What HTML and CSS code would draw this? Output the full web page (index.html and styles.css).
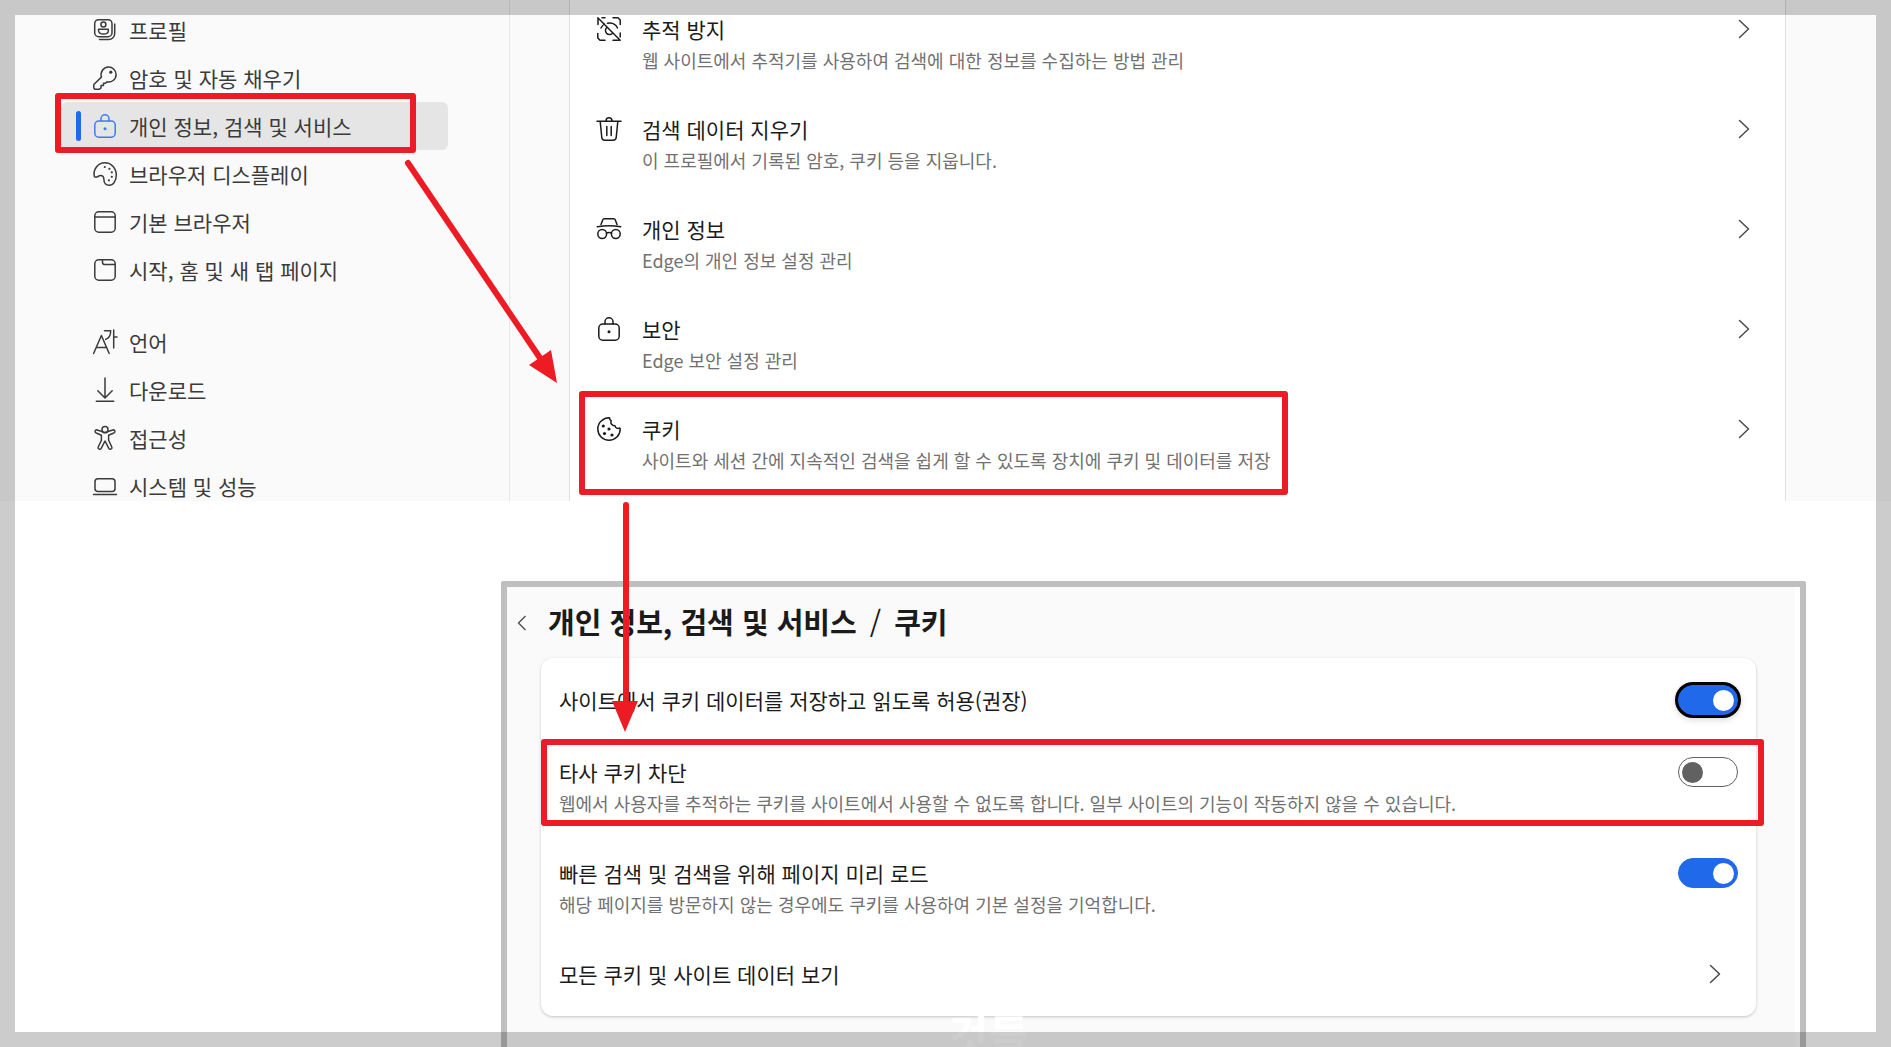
FILE: index.html
```
<!doctype html>
<html lang="ko">
  <head>
    <meta charset="UTF-8" />
    <meta name="viewport" content="width=device-width, initial-scale=1.0" />
    <title>Edge 쿠키 설정</title>
    <link rel="stylesheet" href="styles.css">
  </head>
  <body>
    <svg class="sprite" aria-hidden="true">
      <symbol id="chevron" viewBox="0 0 24 24"><path d="M7.500 3.500 16.500 12 7.500 20.500" /></symbol>
      <symbol id="lock" viewBox="0 0 24 24">
        <path d="M8 7V4.800a4 4 0 0 1 8 0V7" />
        <rect x="1.800" y="7" width="20.400" height="16.200" rx="4" />
        <circle cx="12" cy="14.800" r="1.500" class="dot" />
      </symbol>
    </svg>

    <section class="settings">
      <nav class="sidebar">
        <a class="nav-item" href="#">
          <svg class="icon" viewBox="0 0 24 24">
            <rect x="1.700" y="1.700" width="17.300" height="17" rx="4" />
            <circle cx="10.400" cy="6.500" r="2.500" />
            <path d="M5.500 11.200h9.800v1.200c0 2.200-2 3.600-4.900 3.600s-4.900-1.400-4.900-3.600zM21.700 6v9.500a6 6 0 0 1-6 6H6.500" />
          </svg>
          <span>프로필</span>
        </a>
        <a class="nav-item" href="#">
          <svg class="icon" viewBox="0 0 24 24">
            <path d="M15.500 1a7.500 7.500 0 0 1 7.600 7.500c0 5.200-4.700 8.400-9.100 7.300l-1.500 1.500h-2v2.200H8V22l-1.600 1.200H1.900L.8 22v-3.500l7.600-7.400C6.900 6.200 10.500 1 15.500 1z" />
            <circle cx="17.800" cy="6.200" r="1.600" class="dot" />
          </svg>
          <span>암호 및 자동 채우기</span>
        </a>
        <a class="nav-item active marked" href="#">
          <svg class="icon"><use href="#lock" /></svg>
          <span>개인 정보, 검색 및 서비스</span>
        </a>
        <a class="nav-item" href="#">
          <svg class="icon" viewBox="0 0 24 24">
            <path d="M1.400 14.700C-.3 8 4.500.8 12 .8c6.500 0 11.300 5.500 11.300 12.200 0 6-3 10.200-7.200 10.200-3.300 0-5.200-2-5.200-5.600 0-2.400-1.200-4-3.400-4-2.500 0-3.500 2.800-6.100 1.100z" />
            <g class="dot"><circle cx="11.800" cy="5" r="1.100" /><circle cx="16.400" cy="6.800" r="1.100" /><circle cx="18.800" cy="10.300" r="1.100" /><circle cx="18.800" cy="14.800" r="1.100" /><circle cx="15.900" cy="18.300" r="1.100" /></g>
          </svg>
          <span>브라우저 디스플레이</span>
        </a>
        <a class="nav-item" href="#">
          <svg class="icon" viewBox="0 0 24 24">
            <rect x="1.800" y="1.800" width="20.400" height="20.400" rx="4" />
            <path d="M2 7h20" />
          </svg>
          <span>기본 브라우저</span>
        </a>
        <a class="nav-item" href="#">
          <svg class="icon" viewBox="0 0 24 24">
            <rect x="1.800" y="1.800" width="20.400" height="20.400" rx="4" />
            <path d="M9.500 2v2.200c0 1.600 1 2.400 2.400 2.400H22" />
          </svg>
          <span>시작, 홈 및 새 탭 페이지</span>
        </a>
        <a class="nav-item group-start" href="#">
          <svg class="icon" viewBox="0 0 24 24">
            <path d="m.600 23.500 7.800-18 7.800 18M3.400 17.500h10M11.500.800h6.200c0 5.200-1.500 7.400-5 8.600M20.700 0v18M20.700 7h3.300" />
          </svg>
          <span>언어</span>
        </a>
        <a class="nav-item" href="#">
          <svg class="icon" viewBox="0 0 24 24">
            <path d="M12 0v20M4.800 12.800 12 20l7.200-7.200M3.300 23.200h17.400" />
          </svg>
          <span>다운로드</span>
        </a>
        <a class="nav-item" href="#">
          <svg class="icon" viewBox="0 0 24 24">
            <circle cx="12" cy="3.600" r="3" />
            <path d="M9 5.500 4.200 4C2.300 3.400 1 6 3.200 7l5.200 2.200v5L5.200 21c-.8 2 2 3.200 3 1.300L12 15l3.800 7.300c1 1.900 3.800.7 3-1.300l-3.200-6.800v-5L20.800 7c2.200-1 .9-3.600-1-3L15 5.500C13.500 7.200 10.500 7.200 9 5.500z" />
          </svg>
          <span>접근성</span>
        </a>
        <a class="nav-item" href="#">
          <svg class="icon" viewBox="0 0 24 24">
            <rect x="2" y="4.800" width="20" height="12.700" rx="3" />
            <path d="M.500 20.500h23" />
          </svg>
          <span>시스템 및 성능</span>
        </a>
      </nav>

      <main class="content">
        <div class="list">
          <a class="row" href="#">
            <svg class="icon" viewBox="0 0 24 24">
              <path d="M1 7.500V1M5 .800h3M16 .800h5l2.200 2.200v4.500M.800 16.500v4.500L3 23.200h5M16 23.200h6M23.200 16v4M.800.800l22.400 22.400M4 11c.8-1.600 2-3 3.500-4M10.500 6.200C15 5.400 19 7.600 20.500 11M9.800 10.500a3.800 3.800 0 1 0 5.400 6" />
            </svg>
            <span class="text"><span class="title">추적 방지</span><span class="desc">웹 사이트에서 추적기를 사용하여 검색에 대한 정보를 수집하는 방법 관리</span></span>
            <svg class="icon chevron"><use href="#chevron" /></svg>
          </a>
          <a class="row" href="#">
            <svg class="icon" viewBox="0 0 24 24">
              <path d="M0 4.200h24M9 4c0-4.300 6-4.300 6 0M3.200 4.500l1.600 16a3 3 0 0 0 3 2.700h8.400a3 3 0 0 0 3-2.700l1.600-16M9.800 9.500v9M14.200 9.500v9" />
            </svg>
            <span class="text"><span class="title">검색 데이터 지우기</span><span class="desc">이 프로필에서 기록된 암호, 쿠키 등을 지웁니다.</span></span>
            <svg class="icon chevron"><use href="#chevron" /></svg>
          </a>
          <a class="row" href="#">
            <svg class="icon" viewBox="0 0 24 24">
              <path d="m4 7.500 1.800-4.700c.3-.7.800-1.100 1.500-1.100h9.400c.7 0 1.200.4 1.500 1.100L20 7.500M.300 9.700c7.500-1.300 15.900-1.300 23.400 0M9.500 16.200c1.500-.8 3.500-.8 5 0" />
              <circle cx="5.200" cy="17" r="4.400" />
              <circle cx="18.800" cy="17" r="4.400" />
            </svg>
            <span class="text"><span class="title">개인 정보</span><span class="desc">Edge의 개인 정보 설정 관리</span></span>
            <svg class="icon chevron"><use href="#chevron" /></svg>
          </a>
          <a class="row" href="#">
            <svg class="icon"><use href="#lock" /></svg>
            <span class="text"><span class="title">보안</span><span class="desc">Edge 보안 설정 관리</span></span>
            <svg class="icon chevron"><use href="#chevron" /></svg>
          </a>
          <a class="row marked" href="#">
            <svg class="icon" viewBox="0 0 24 24">
              <path d="M12.500.800C6 .700.800 5.800.800 12S5.800 23.200 12 23.200 23.200 18.200 23.200 12l-.4-1c-2.200.9-4.300.3-4.800-2.200-3 0-4.900-2.200-3.800-5.200C13 3.200 12.400 2.300 12.500.800z" />
              <g class="dot"><circle cx="6.300" cy="9" r="1.600" /><circle cx="12" cy="12" r="1.600" /><circle cx="7.500" cy="16.500" r="1.600" /><circle cx="15" cy="18" r="1.600" /></g>
            </svg>
            <span class="text"><span class="title">쿠키</span><span class="desc">사이트와 세션 간에 지속적인 검색을 쉽게 할 수 있도록 장치에 쿠키 및 데이터를 저장</span></span>
            <svg class="icon chevron"><use href="#chevron" /></svg>
          </a>
        </div>
      </main>
    </section>

    <section class="panel">
      <header class="panel-header">
        <button class="back" type="button" aria-label="뒤로">
          <svg viewBox="0 0 10 16"><path d="M8.500 1 1.500 8l7 7" /></svg>
        </button>
        <h1>
          <span>개인 정보, 검색 및 서비스</span>
          <span class="slash">/</span>
          <span>쿠키</span>
        </h1>
      </header>
      <div class="card">
        <div class="option single">
          <label class="title" for="allow-cookies">사이트에서 쿠키 데이터를 저장하고 읽도록 허용(권장)</label>
          <input class="toggle ring" type="checkbox" id="allow-cookies" checked />
        </div>
        <div class="option marked">
          <label class="text" for="block-third">
            <span class="title">타사 쿠키 차단</span>
            <span class="desc">웹에서 사용자를 추적하는 쿠키를 사이트에서 사용할 수 없도록 합니다. 일부 사이트의 기능이 작동하지 않을 수 있습니다.</span>
          </label>
          <input class="toggle" type="checkbox" id="block-third" />
        </div>
        <div class="option">
          <label class="text" for="preload">
            <span class="title">빠른 검색 및 검색을 위해 페이지 미리 로드</span>
            <span class="desc">해당 페이지를 방문하지 않는 경우에도 쿠키를 사용하여 기본 설정을 기억합니다.</span>
          </label>
          <input class="toggle" type="checkbox" id="preload" checked />
        </div>
        <a class="option single" href="#">
          <span class="title">모든 쿠키 및 사이트 데이터 보기</span>
          <svg class="icon chevron"><use href="#chevron" /></svg>
        </a>
      </div>
    </section>

    <!-- arrows between the highlighted steps -->
    <svg class="arrows" aria-hidden="true">
      <path class="shaft" d="M408 163 540 358M626 505V704" />
      <path class="head" d="M557 383 529 365 551 350ZM625 732 612 701H638Z" />
    </svg>
    <div class="watermark">것들</div>
    <div class="frame"></div>
  </body>
</html>
```
FILE: styles.css
```
* {
  box-sizing: border-box;
}

body {
  margin: 0;
  height: 100vh;
  position: relative;
  display: flex;
  flex-direction: column;
  gap: 80px;
  overflow: hidden;
  background: #fff;
  color: #1b1b1b;
  font-family: "Noto Sans CJK KR", "Noto Sans", sans-serif;
  font-size: 21px;
  line-height: 32px;
}

a {
  color: inherit;
  text-decoration: none;
}

.sprite {
  position: absolute;
  width: 0;
  height: 0;
}

.icon {
  flex: none;
  width: 24px;
  height: 24px;
  fill: none;
  stroke: currentColor;
  stroke-width: 1.5;
  stroke-linecap: round;
  stroke-linejoin: round;
  overflow: visible;
}

.dot {
  fill: currentColor;
  stroke: none;
}

.chevron {
  color: #4a4a4a;
}

/* upper settings window */
.settings {
  flex: none;
  display: flex;
  height: 501px;
  overflow: hidden;
  background: #fafafa;
}

.sidebar {
  flex: none;
  width: 510px;
  padding: 6px 61px 0;
  border-right: 1px solid #e8e8e8;
  color: #3b3b3b;
}

.nav-item {
  position: relative;
  display: flex;
  align-items: center;
  gap: 12px;
  height: 48px;
  padding-left: 32px;
  border-radius: 6px;
}

.nav-item.active {
  background: #e5e5e5;
}

.nav-item.active .icon {
  color: #3b7cf0;
}

.nav-item.active::before {
  content: "";
  position: absolute;
  left: 15px;
  top: 9px;
  width: 5px;
  height: 30px;
  border-radius: 3px;
  background: #2169eb;
}

.group-start {
  margin-top: 24px;
}

.content {
  flex: 1;
  display: flex;
  padding: 0 105px 0 59px;
}

.list {
  flex: 1;
  margin-top: -8px;
  background: #fff;
  border: solid #e0e0e0;
  border-width: 0 1px;
}

.row {
  position: relative;
  display: flex;
  gap: 21px;
  height: 100px;
  padding: 22px 29px 0 27px;
}

.row .icon {
  margin-top: 3px;
}

.text {
  flex: 1;
  display: flex;
  flex-direction: column;
  margin-top: -1px;
}

.desc {
  color: #717171;
  font-size: 18px;
  line-height: 30px;
}

/* red boxes */
.marked::after {
  content: "";
  position: absolute;
  z-index: 1;
  border: 6px solid #ed1c24;
  border-radius: 3px;
  pointer-events: none;
}

.nav-item.marked::after {
  inset: -9px 32px -3px -6px;
}

.row.marked::after {
  inset: -1px 497px -3px 9px;
}

.option.marked::after {
  inset: 3px -8px 11px 0;
}

/* lower cookie window */
.panel {
  flex: 1;
  margin: 0 85px 0 501px;
  padding-right: 5px;
  border: 6px solid #bfbfbf;
  border-bottom: 0;
  border-radius: 3px 3px 0 0;
  background: linear-gradient(#fafafa, #fafafa) content-box #fff;
}

.panel-header {
  display: flex;
  align-items: center;
  gap: 20px;
  height: 71px;
  padding-left: 10px;
}

.back {
  width: 11px;
  height: 16px;
  padding: 0;
  border: 0;
  background: none;
}

.back svg {
  display: block;
  width: 10px;
  height: 16px;
  fill: none;
  stroke: #4a4a4a;
  stroke-width: 1.3;
}

h1 {
  display: flex;
  gap: 13px;
  margin: 0;
  padding-bottom: 3px;
  font-size: 29px;
  font-weight: 700;
}

.slash {
  font-weight: 400;
}

.card {
  margin: 0 39px 0 34px;
  padding: 6px 0;
  border-radius: 12px;
  background: #fff;
  box-shadow: 0 1px 3px rgba(0, 0, 0, 0.22);
}

.option {
  position: relative;
  display: flex;
  gap: 20px;
  height: 101px;
  padding: 21px 18px 0 18px;
}

.option.single {
  height: 72px;
  align-items: center;
  justify-content: space-between;
  padding-top: 0;
}

.option .chevron {
  margin-right: 11px;
}

.toggle {
  appearance: none;
  flex: none;
  display: flex;
  align-items: center;
  width: 60px;
  height: 30px;
  margin: 0;
  padding: 0 3px;
  border: 1px solid #616161;
  border-radius: 15px;
  background: #fff;
}

.toggle::before {
  content: "";
  width: 21px;
  height: 21px;
  border-radius: 50%;
  background: #616161;
}

.toggle:checked {
  justify-content: flex-end;
  border-color: #2169eb;
  background: #2169eb;
}

.toggle:checked::before {
  background: #fff;
}

.toggle.ring {
  box-shadow: 0 0 0 3px #000, 0 2px 6px 3px rgba(0, 0, 0, 0.15);
}

.arrows {
  position: absolute;
  inset: 0;
  width: 100%;
  height: 100%;
  z-index: 2;
  pointer-events: none;
}

.shaft {
  fill: none;
  stroke: #ed1c24;
  stroke-width: 6;
  stroke-linecap: round;
}

.head {
  fill: #ed1c24;
}

.watermark {
  position: absolute;
  left: 948px;
  bottom: -9px;
  color: #fff;
  font-size: 44px;
  font-weight: 700;
  line-height: 44px;
}

.frame {
  position: absolute;
  inset: 0;
  z-index: 3;
  border: 15px solid rgba(0, 0, 0, 0.2);
  pointer-events: none;
}
```
